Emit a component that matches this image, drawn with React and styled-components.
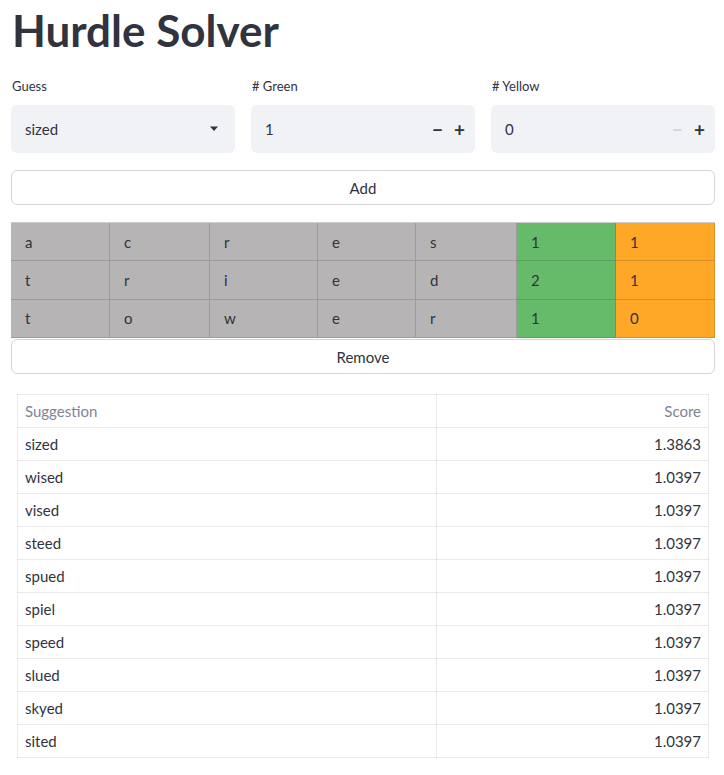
import React from "react";
import styled, { createGlobalStyle } from "styled-components";

const GlobalStyle = createGlobalStyle`
  body {
    margin: 0;
    background: #ffffff;
    font-family: "Lato", "Noto Sans", sans-serif;
    color: #31333f;
  }
`;

const history = [
  { letters: ["a", "c", "r", "e", "s"], green: 1, yellow: 1 },
  { letters: ["t", "r", "i", "e", "d"], green: 2, yellow: 1 },
  { letters: ["t", "o", "w", "e", "r"], green: 1, yellow: 0 },
];

const suggestions = [
  ["sized", "1.3863"],
  ["wised", "1.0397"],
  ["vised", "1.0397"],
  ["steed", "1.0397"],
  ["spued", "1.0397"],
  ["spiel", "1.0397"],
  ["speed", "1.0397"],
  ["slued", "1.0397"],
  ["skyed", "1.0397"],
  ["sited", "1.0397"],
];

export default function App() {
  return (
    <>
      <GlobalStyle />
      <Page>
        <Title>Hurdle Solver</Title>
        <InputRow>
          <Field>
            <Label>Guess</Label>
            <InputBox>
              <span>sized</span>
              <svg width="10" height="6" viewBox="0 0 10 6">
                <path d="M1 0.5h8L5 5z" fill="#31333f" />
              </svg>
            </InputBox>
          </Field>
          <Field>
            <Label># Green</Label>
            <InputBox>
              <span>1</span>
              <Steppers>
                <StepSign>−</StepSign>
                <StepSign>+</StepSign>
              </Steppers>
            </InputBox>
          </Field>
          <Field>
            <Label># Yellow</Label>
            <InputBox>
              <span>0</span>
              <Steppers>
                <StepSign $disabled>−</StepSign>
                <StepSign>+</StepSign>
              </Steppers>
            </InputBox>
          </Field>
        </InputRow>
        <Button>Add</Button>
        <Grid>
          {history.map((row, r) => (
            <React.Fragment key={r}>
              {row.letters.map((l, i) => (
                <Cell key={i} $bg="#b6b4b4">
                  {l}
                </Cell>
              ))}
              <Cell $bg="#66bb6a">{row.green}</Cell>
              <Cell $bg="#ffa726">{row.yellow}</Cell>
            </React.Fragment>
          ))}
        </Grid>
        <Button $flush>Remove</Button>
        <TableWrap>
          <Table>
            <thead>
              <tr>
                <Th $width="404px">Suggestion</Th>
                <Th $right>Score</Th>
              </tr>
            </thead>
            <tbody>
              {suggestions.map(([w, s]) => (
                <tr key={w}>
                  <Td>{w}</Td>
                  <Td $right>{s}</Td>
                </tr>
              ))}
            </tbody>
          </Table>
        </TableWrap>
      </Page>
    </>
  );
}

const Page = styled.div`
  padding: 0 9px 0 11px;
`;

const Title = styled.h1`
  margin: 0;
  padding: 0 0 0 1px;
  font-size: 44px;
  font-weight: 700;
  line-height: 60px;
  color: #31333f;
`;

const InputRow = styled.div`
  display: grid;
  grid-template-columns: repeat(3, 1fr);
  gap: 16px;
  margin-top: 16px;
`;

const Field = styled.div`
  display: flex;
  flex-direction: column;
`;

const Label = styled.label`
  font-size: 13px;
  line-height: 20px;
  padding-left: 1px;
  margin-bottom: 9px;
`;

const InputBox = styled.div`
  height: 48px;
  background: #f0f2f6;
  border-radius: 6px;
  display: flex;
  align-items: center;
  justify-content: space-between;
  padding: 0 16px 0 14px;
  font-size: 15px;
  color: #31333f;
  box-sizing: border-box;
`;

const Steppers = styled.div`
  display: flex;
  gap: 11px;
  margin-right: -6px;
`;

const StepSign = styled.span`
  font-size: 19px;
  font-weight: 700;
  color: ${(p) => (p.$disabled ? "#d3d4d8" : "#31333f")};
`;

const Button = styled.div`
  height: 35px;
  box-sizing: border-box;
  border: 1px solid rgba(49, 51, 63, 0.2);
  border-radius: 6px;
  display: flex;
  align-items: center;
  justify-content: center;
  font-size: 15px;
  color: #31333f;
  margin-top: ${(p) => (p.$flush ? "1px" : "17px")};
`;

const Grid = styled.div`
  display: grid;
  grid-template-columns: 99px 100px 108px 98px 101px 99px 99px;
  grid-auto-rows: 38.4px;
  margin-top: 17px;
  border-top: 1px solid rgba(49, 51, 63, 0.25);
`;

const Cell = styled.div`
  background: ${(p) => p.$bg};
  box-sizing: border-box;
  border-right: 1px solid rgba(49, 51, 63, 0.2);
  border-bottom: 1px solid rgba(49, 51, 63, 0.2);
  display: flex;
  align-items: center;
  padding-left: 14px;
  font-size: 15px;
  color: #31333f;
`;

const TableWrap = styled.div`
  padding: 20px 6px 0 6px;
`;

const Table = styled.table`
  width: 100%;
  border-collapse: collapse;
  font-size: 15px;
`;

const Th = styled.th`
  height: 32px;
  padding: 0 7px;
  width: ${(p) => p.$width || "auto"};
  font-weight: 400;
  color: #808495;
  text-align: ${(p) => (p.$right ? "right" : "left")};
  border: 1px solid rgba(49, 51, 63, 0.1);
`;

const Td = styled.td`
  height: 32px;
  padding: 0 7px;
  color: #31333f;
  text-align: ${(p) => (p.$right ? "right" : "left")};
  border: 1px solid rgba(49, 51, 63, 0.1);
`;
